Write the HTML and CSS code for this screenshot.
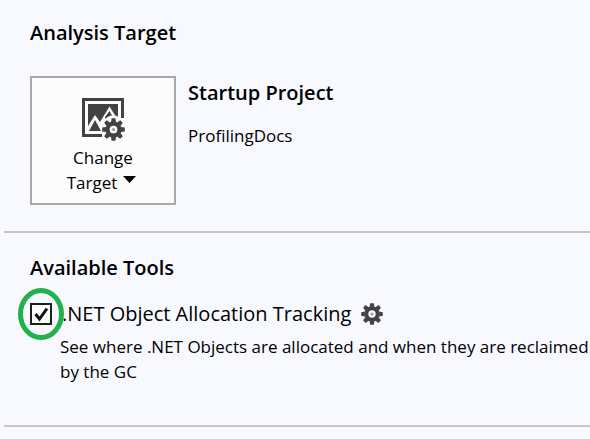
FILE: index.html
```html
<!DOCTYPE html>
<html lang="en">
<head>
<meta charset="utf-8">
<title>Analysis Target</title>
<link rel="stylesheet" href="styles.css">
</head>
<body>
<svg class="defs" aria-hidden="true">
  <symbol id="gear" viewBox="-11 -11 22 22">
    <circle r="5.700" fill="none" stroke="currentColor" stroke-width="4"/>
    <g fill="currentColor">
      <path id="teeth" d="M-2.4-7.2-1.8-10.8H1.8L2.4-7.2ZM-2.4 7.2-1.8 10.8H1.8L2.4 7.2ZM-7.2-2.4-10.8-1.8V1.8L-7.2 2.4ZM7.2-2.4 10.8-1.8V1.8L7.2 2.4Z"/>
      <use href="#teeth" transform="rotate(45)"/>
      <circle r="1.500" opacity=".5"/>
    </g>
  </symbol>
</svg>
<main>
  <section class="section">
    <h2>Analysis Target</h2>
    <div class="target">
      <button type="button" class="change">
        <svg class="picture" viewBox="0 0 44 44" aria-hidden="true">
          <path d="M1 1H43V40H1Z" fill="#424242"/>
          <path d="M4 4H40V37H4Z" fill="#fcfcfc"/>
          <path d="M7 7H37V34H7Z" fill="#424242"/>
          <path d="M7 29 14 18 19 25 28.500 9.500 37 23V34H7Z" fill="#fcfcfc"/>
          <path d="M8 34 14 23 20 34Z" fill="#424242"/>
          <path d="M24 20 28.500 14 32 20Q27 21 24 25Z" fill="#424242"/>
          <path d="M24 22Q32 15 39 21H44V44H21V31Z" fill="#fcfcfc"/>
          <use class="cog" href="#gear" x="21" y="21" width="23" height="23"/>
        </svg>
        <span>Change</span>
        <span class="drop">Target <svg class="arrow" viewBox="0 0 13 7" aria-hidden="true"><path d="M0 0H13L6.500 7Z"/></svg></span>
      </button>
      <div class="project">
        <h2>Startup Project</h2>
        <p>ProfilingDocs</p>
      </div>
    </div>
  </section>
  <section class="section tools">
    <h2>Available Tools</h2>
    <div class="tool">
      <span class="check">
        <input type="checkbox" id="alloc" checked aria-describedby="alloc-info">
        <svg class="ring" viewBox="0 0 46 52" aria-hidden="true"><ellipse cx="23" cy="26" rx="20.500" ry="23.500"/></svg>
      </span>
      <label for="alloc">.NET Object Allocation Tracking</label>
      <button type="button" class="settings" aria-label="Settings"><svg viewBox="0 0 22 22" aria-hidden="true"><use href="#gear" width="22" height="22"/></svg></button>
    </div>
    <p class="info" id="alloc-info">See where .NET Objects are allocated and when they are reclaimed by the GC</p>
  </section>
</main>
</body>
</html>
```
FILE: styles.css
```css
* { box-sizing: border-box; }

body {
  margin: 0;
  background: #f8f9ff;
  color: #000;
  font: 17px/25px "Open Sans", "Noto Sans", sans-serif;
}

h2, p { margin: 0; }

h2 {
  font-size: 20px;
  font-weight: 600;
  line-height: 28px;
}

.defs { position: absolute; width: 0; height: 0; }

main { padding-left: 4px; }

.section {
  padding: 19px 0 26px 26px;
  border-bottom: 2px solid #c6c6c6;
}

.target {
  display: flex;
  gap: 12px;
  margin-top: 29px;
}

.change {
  display: flex;
  flex-direction: column;
  align-items: center;
  width: 146px;
  padding: 19px 8px 8px;
  border: 2px solid #a9a9a9;
  background: #fcfcfc;
  color: inherit;
  font: inherit;
}

.picture { width: 44px; height: 44px; margin-bottom: 4px; }
.cog { color: #424242; }
.drop { display: flex; gap: 6px; padding-right: 3px; }
.arrow { width: 13px; height: 7px; margin-top: 6px; }

.project { padding-top: 3px; }
.project p { margin-top: 16px; }

.tools { padding: 21px 0 41px 26px; }

.tool {
  display: flex;
  align-items: center;
  margin-top: 17px;
  font-size: 20px;
  line-height: 30px;
}

.check {
  position: relative;
  display: flex;
  margin-right: 10px;
}

.check input {
  appearance: none;
  width: 22px;
  height: 22px;
  margin: 0;
  border: 2px solid #1e1e1e;
  background: #fcfcfc url("data:image/svg+xml,%3Csvg xmlns='http://www.w3.org/2000/svg' viewBox='0 0 18 18'%3E%3Cpath d='M3.500 9 7.500 14 15 3.500' fill='none' stroke='%23111' stroke-width='3'/%3E%3C/svg%3E") center / 18px;
}

.ring {
  position: absolute;
  top: -15px;
  left: -12px;
  width: 46px;
  height: 52px;
  fill: none;
  stroke: #22b14c;
  stroke-width: 5px;
  pointer-events: none;
}

.settings {
  display: flex;
  margin-left: 10px;
  padding: 0;
  border: 0;
  background: none;
  color: #424242;
}

.settings svg { width: 22px; height: 22px; }

.info { margin-top: 5px; padding-left: 30px; }
```
